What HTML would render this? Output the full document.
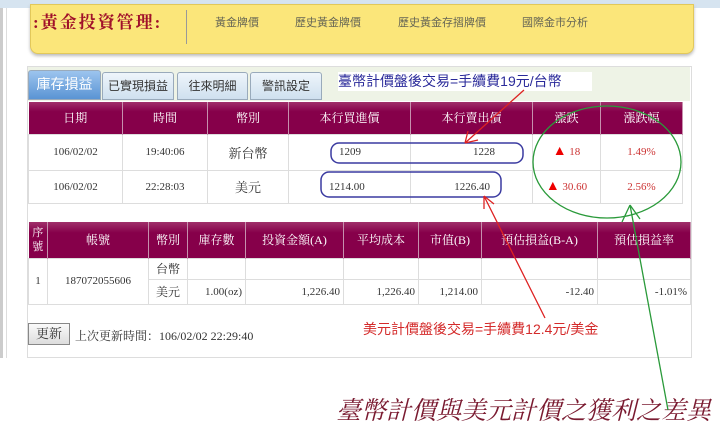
<!DOCTYPE html><html><head><meta charset="utf-8"><style>
body{margin:0;width:720px;height:444px;overflow:hidden;background:#fff;position:relative;font-family:"Liberation Serif","Noto Serif CJK SC",serif;font-size:11px;color:#333}
.a{position:absolute}
table{border-collapse:collapse;position:absolute;table-layout:fixed}
td,th{padding:0;text-align:center;font-weight:normal}
th{background:linear-gradient(#a0306a,#86004a 30%,#86004a);color:#fff;border-right:1px solid #c690ad;font-size:12px}
td{border:1px solid #ddd;font-size:11px}
.tab{position:absolute;top:72px;height:26px;line-height:26px;text-align:center;border:1px solid #9ab;border-radius:3px 3px 0 0;background:linear-gradient(#eef5fb,#cfe0ef);font-family:"Liberation Sans","Noto Sans CJK TC",sans-serif;font-size:12px;color:#333}
.r{text-align:right;padding-right:3px}
</style></head><body>
<div class="a" style="left:0;top:0;width:720px;height:8px;background:#d6e4f0"></div>
<div class="a" style="left:0;top:8px;width:3px;height:350px;background:#ccc"></div>
<div class="a" style="left:6px;top:8px;width:1px;height:350px;background:#ddd"></div>
<div class="a" style="left:30px;top:4px;width:662px;height:48px;background:#fbe67a;border:1px solid #e2c85a;border-radius:0 0 8px 8px;box-shadow:0 2px 3px #bbb"></div>
<div class="a" style="left:33px;top:8px;font-size:17px;font-weight:bold;color:#a0102a;letter-spacing:2px">:黃金投資管理:</div>
<div class="a" style="left:186px;top:10px;width:1px;height:34px;background:#999"></div>
<div class="a" style="left:215px;top:14px;font-family:'Liberation Sans','Noto Sans CJK TC',sans-serif;font-size:11px;color:#665">黃金牌價</div>
<div class="a" style="left:295px;top:14px;font-family:'Liberation Sans','Noto Sans CJK TC',sans-serif;font-size:11px;color:#665">歷史黃金牌價</div>
<div class="a" style="left:398px;top:14px;font-family:'Liberation Sans','Noto Sans CJK TC',sans-serif;font-size:11px;color:#665">歷史黃金存摺牌價</div>
<div class="a" style="left:522px;top:14px;font-family:'Liberation Sans','Noto Sans CJK TC',sans-serif;font-size:11px;color:#665">國際金市分析</div>
<div class="a" style="left:27px;top:66px;width:663px;height:290px;border:1px solid #ddd"></div>
<div class="a" style="left:28px;top:67px;width:662px;height:34px;background:#eef3e6"></div>
<div class="tab" style="left:28px;width:71px;background:linear-gradient(#9cc4ee,#5a94d4);color:#fff;font-size:14px;height:28px;top:70px">庫存損益</div>
<div class="tab" style="left:102px;width:70px">已實現損益</div>
<div class="tab" style="left:177px;width:69px">往來明細</div>
<div class="tab" style="left:250px;width:70px">警訊設定</div>
<div class="a" style="left:338px;top:72px;width:254px;height:19px;background:#fff;color:#2a2a9a;font-family:'Liberation Sans','Noto Sans CJK TC',sans-serif;font-size:14px;line-height:19px">臺幣計價盤後交易=手續費19元/台幣</div>
<table style="left:28px;top:102px;width:654px">
<colgroup><col style="width:94px"><col style="width:85px"><col style="width:81px"><col style="width:122px"><col style="width:122px"><col style="width:68px"><col style="width:82px"></colgroup>
<tr style="height:32px"><th>日期</th><th>時間</th><th>幣別</th><th>本行買進價</th><th>本行賣出價</th><th>漲跌</th><th>漲跌幅</th></tr>
<tr style="height:36px"><td>106/02/02</td><td>19:40:06</td><td style="font-size:13px">新台幣</td><td style="text-align:left;padding-left:50px">1209</td><td class="r" style="padding-right:37px">1228</td><td style="color:#c33"><span style="color:#e00;font-size:14px">▲</span> 18</td><td style="color:#c33">1.49%</td></tr>
<tr style="height:33px"><td>106/02/02</td><td>22:28:03</td><td style="font-size:13px">美元</td><td style="text-align:left;padding-left:40px">1214.00</td><td class="r" style="padding-right:42px">1226.40</td><td style="color:#c33"><span style="color:#e00;font-size:14px">▲</span> 30.60</td><td style="color:#c33">2.56%</td></tr>
</table>
<table style="left:28px;top:222px;width:662px">
<colgroup><col style="width:19px"><col style="width:101px"><col style="width:39px"><col style="width:58px"><col style="width:98px"><col style="width:75px"><col style="width:63px"><col style="width:116px"><col style="width:93px"></colgroup>
<tr style="height:36px"><th style="font-size:11px;line-height:14px">序<br>號</th><th>帳號</th><th>幣別</th><th>庫存數</th><th>投資金額(A)</th><th>平均成本</th><th>市值(B)</th><th>預估損益(B-A)</th><th>預估損益率</th></tr>
<tr style="height:21px"><td rowspan="2">1</td><td rowspan="2">187072055606</td><td style="font-size:12px">台幣</td><td></td><td></td><td></td><td></td><td></td><td></td></tr>
<tr style="height:25px"><td style="font-size:12px">美元</td><td class="r">1.00(oz)</td><td class="r">1,226.40</td><td class="r">1,226.40</td><td class="r">1,214.00</td><td class="r">-12.40</td><td class="r">-1.01%</td></tr>
</table>
<div class="a" style="left:28px;top:323px;width:40px;height:20px;border:1px solid #888;background:linear-gradient(#fafafa,#ddd);text-align:center;line-height:20px;font-size:13px">更新</div>
<div class="a" style="left:75px;top:327px;font-size:12px">上次更新時間：106/02/02 22:29:40</div>
<div class="a" style="left:363px;top:319px;color:#d42a2a;font-family:'Liberation Sans','Noto Sans CJK TC',sans-serif;font-size:14px">美元計價盤後交易=手續費12.4元/美金</div>
<div class="a" style="left:336px;top:391px;color:#7a1a30;font-size:25px;font-style:italic">臺幣計價與美元計價之獲利之差異</div>
<svg class="a" style="left:0;top:0" width="720" height="444">
<rect x="331" y="143" width="192" height="20" rx="8" fill="none" stroke="#3a3aa0" stroke-width="1.5"/>
<rect x="321" y="172" width="180" height="25" rx="8" fill="none" stroke="#3a3aa0" stroke-width="1.5"/>
<ellipse cx="607" cy="162" rx="74" ry="56" fill="none" stroke="#2a9a3a" stroke-width="1.3"/>
<path d="M524 90 L465 143 M465 143 L478 140 M465 143 L468 131" stroke="#d22" stroke-width="1.3" fill="none"/>
<path d="M545 318 L484 196 M484 196 L484 209 M484 196 L494 204" stroke="#d22" stroke-width="1.3" fill="none"/>
<path d="M668 410 L630 205 M630 205 L622 222 M630 205 L640 219" stroke="#2a9a3a" stroke-width="1.3" fill="none"/>
</svg>
</body></html>
